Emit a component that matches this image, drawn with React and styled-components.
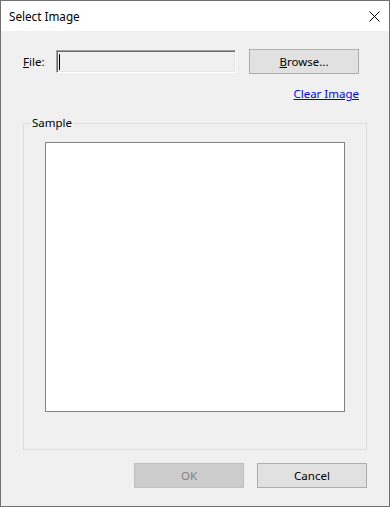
import React from "react";
import styled, { createGlobalStyle } from "styled-components";

const Global = createGlobalStyle`
  html, body { margin: 0; padding: 0; background: #ffffff; }
  body { font-family: "Segoe UI", "Noto Sans", "Open Sans", sans-serif; font-size: 11.5px; color: #000; }
  * { box-sizing: border-box; }
`;

const Window = styled.div`
  width: 390px;
  height: 507px;
  border: 1px solid #707070;
  background: #f0f0f0;
  display: flex;
  flex-direction: column;
`;

const TitleBar = styled.div`
  height: 30px;
  flex: none;
  background: #ffffff;
  display: flex;
  align-items: center;
  justify-content: space-between;
  padding-left: 8px;
`;

const Title = styled.span`
  font-size: 11.7px;
  line-height: 16px;
`;

const CloseButton = styled.div`
  width: 30px;
  height: 30px;
  display: flex;
  align-items: center;
  justify-content: center;
`;

const Body = styled.div`
  flex: 1;
  display: flex;
  flex-direction: column;
  padding: 18px 22px 0 22px;
`;

const FileRow = styled.div`
  display: flex;
  align-items: center;
  height: 25px;
  padding-right: 8px;
`;

const Label = styled.span`
  line-height: 16px;
  width: 33px;
  flex: none;
`;

const TextBox = styled.div`
  width: 180px;
  height: 23px;
  background: #f0f0f0;
  border-top: 1px solid #a0a0a0;
  border-left: 1px solid #a0a0a0;
  border-right: 1px solid #ffffff;
  border-bottom: 1px solid #ffffff;
  box-shadow: inset 1px 1px 0 #696969, inset -1px -1px 0 #e3e3e3;
  display: flex;
  align-items: center;
  padding-left: 2px;
`;

const Caret = styled.span`
  width: 1px;
  height: 16px;
  background: #000;
`;

const Button = styled.div`
  width: 110px;
  height: 25px;
  flex: none;
  display: flex;
  align-items: center;
  justify-content: center;
  line-height: 16px;
  background: ${(p) => (p.$disabled ? "#cccccc" : "#e1e1e1")};
  border: 1px solid ${(p) => (p.$disabled ? "#bfbfbf" : "#adadad")};
  color: ${(p) => (p.$disabled ? "#838383" : "#000000")};
  margin-left: ${(p) => p.$ml || 0}px;
`;

const LinkRow = styled.div`
  display: flex;
  justify-content: flex-end;
  padding-right: 8px;
  margin-top: 12px;
  line-height: 16px;
`;

const Link = styled.a`
  color: #0000ff;
  text-decoration: underline;
  cursor: pointer;
`;

const Group = styled.fieldset`
  margin: 13px 0 0 0;
  padding: 0 0 37px 21px;
  border: 1px solid #dcdcdc;
  min-width: 0;
`;

const Legend = styled.legend`
  margin-left: -14px;
  padding: 0 1px;
  line-height: 16px;
`;

const ImageBox = styled.div`
  width: 300px;
  height: 270px;
  margin-top: 11px;
  background: #ffffff;
  border: 1px solid #828282;
`;

const ButtonRow = styled.div`
  display: flex;
  justify-content: flex-end;
  margin-top: 13px;
`;

export default function App() {
  return (
    <>
      <Global />
      <Window>
        <TitleBar>
          <Title>Select Image</Title>
          <CloseButton>
            <svg width="11" height="11" viewBox="0 0 11 11">
              <path d="M0.5 0.5 L10.5 10.5 M10.5 0.5 L0.5 10.5" stroke="#000" strokeWidth="1" fill="none" />
            </svg>
          </CloseButton>
        </TitleBar>
        <Body>
          <FileRow>
            <Label>
              <u>F</u>ile:
            </Label>
            <TextBox>
              <Caret />
            </TextBox>
            <Button $ml={13}>
              <span>
                <u>B</u>rowse...
              </span>
            </Button>
          </FileRow>
          <LinkRow>
            <Link>Clear Image</Link>
          </LinkRow>
          <Group>
            <Legend>Sample</Legend>
            <ImageBox />
          </Group>
          <ButtonRow>
            <Button $disabled>OK</Button>
            <Button $ml={13}>Cancel</Button>
          </ButtonRow>
        </Body>
      </Window>
    </>
  );
}
